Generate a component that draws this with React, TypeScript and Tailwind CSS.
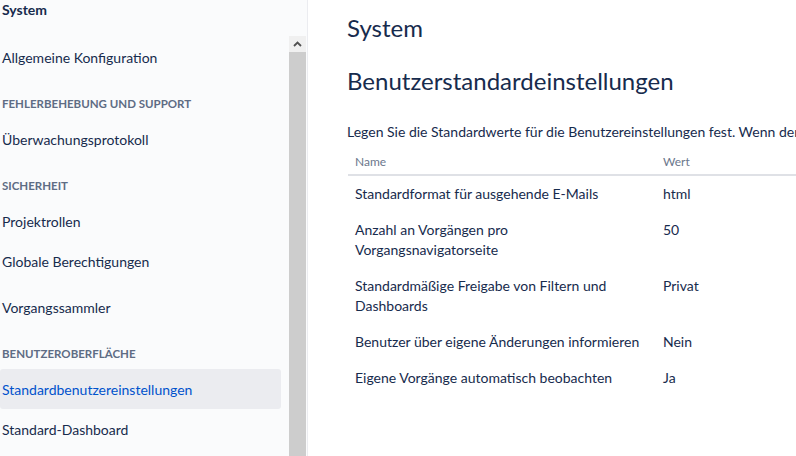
import React from "react";

const font = { fontFamily: '"Lato", "Liberation Sans", sans-serif' };

type NavItem = { label: string; active?: boolean };
type NavGroup = { title?: string; items: NavItem[] };

const groups: NavGroup[] = [
  { items: [{ label: "Allgemeine Konfiguration" }] },
  { title: "Fehlerbehebung und Support", items: [{ label: "Überwachungsprotokoll" }] },
  {
    title: "Sicherheit",
    items: [{ label: "Projektrollen" }, { label: "Globale Berechtigungen" }, { label: "Vorgangssammler" }],
  },
  {
    title: "Benutzeroberfläche",
    items: [{ label: "Standardbenutzereinstellungen", active: true }, { label: "Standard-Dashboard" }],
  },
];

const rows: [string, string][] = [
  ["Standardformat für ausgehende E-Mails", "html"],
  ["Anzahl an Vorgängen pro Vorgangsnavigatorseite", "50"],
  ["Standardmäßige Freigabe von Filtern und Dashboards", "Privat"],
  ["Benutzer über eigene Änderungen informieren", "Nein"],
  ["Eigene Vorgänge automatisch beobachten", "Ja"],
];

const Sidebar = () => (
  <aside className="w-[308px] shrink-0 h-full bg-[#fafbfc] border-r border-[#ebecf0] flex flex-col">
    <div className="h-9 shrink-0 pl-[2px] text-[14px] leading-5 font-bold text-[#172b4d]">System</div>
    <div className="flex-1 flex min-h-0">
      <nav className="w-[289px] shrink-0 overflow-hidden">
        {groups.map((g, gi) => (
          <div key={gi} className={gi === 0 ? "pt-px" : ""}>
            {g.title && (
              <div className="mt-[19px] mb-[7px] h-4 pl-[2px] text-[11.5px] leading-4 font-bold uppercase text-[#5e6c84]">
                {g.title}
              </div>
            )}
            {g.items.map((it) => (
              <div
                key={it.label}
                className={
                  "h-10 mr-2 pl-[2px] flex items-center text-[14px] rounded-[3px] " +
                  (it.active ? "bg-[#ebecf0] text-[#0052cc]" : "text-[#172b4d]") +
                  (it.label === "Vorgangssammler" ? " mt-[6px]" : "")
                }
              >
                {it.label}
              </div>
            ))}
          </div>
        ))}
      </nav>
      {/* scrollbar */}
      <div className="w-[17px] shrink-0 bg-[#f0f0f0] flex flex-col">
        <div className="h-4 flex items-center justify-center">
          <svg width="9" height="6" viewBox="0 0 9 6">
            <path d="M1 5 L4.5 1.5 L8 5" fill="none" stroke="#505050" strokeWidth="1.8" />
          </svg>
        </div>
        <div className="flex-1 bg-[#cdcdcd]" />
      </div>
    </div>
  </aside>
);

export default function App() {
  return (
    <div className="w-[796px] h-[456px] overflow-hidden flex bg-white text-[#172b4d]" style={font}>
      <Sidebar />
      <main className="flex-1 min-w-0 overflow-hidden pl-[39px] pt-3">
        <h1 className="text-[24px] leading-8 font-normal">System</h1>
        <h2 className="mt-[21px] text-[24px] leading-8 font-normal">Benutzerstandardeinstellungen</h2>
        <p className="mt-[25px] text-[14px] leading-5 whitespace-nowrap">
          Legen Sie die Standardwerte für die Benutzereinstellungen fest. Wenn der Benutzer diese Einstellungen nicht
          geändert hat, werden diese Werte verwendet.
        </p>
        <table className="mt-[10px] w-[620px] ml-px table-fixed border-collapse text-[14px] leading-5">
          <colgroup>
            <col className="w-[315px]" />
            <col />
          </colgroup>
          <thead>
            <tr className="border-b-2 border-[#dfe1e6] text-[12px] leading-4 text-[#6b778c]">
              <th className="text-left font-normal pl-[7px] pr-[10px] pt-[2px] pb-[4px]">Name</th>
              <th className="text-left font-normal px-0 pt-[2px] pb-[4px]">Wert</th>
            </tr>
          </thead>
          <tbody>
            {rows.map(([name, value]) => (
              <tr key={name}>
                <td className="align-top pl-[7px] pr-[12px] py-2">{name}</td>
                <td className="align-top py-2">{value}</td>
              </tr>
            ))}
          </tbody>
        </table>
      </main>
    </div>
  );
}
